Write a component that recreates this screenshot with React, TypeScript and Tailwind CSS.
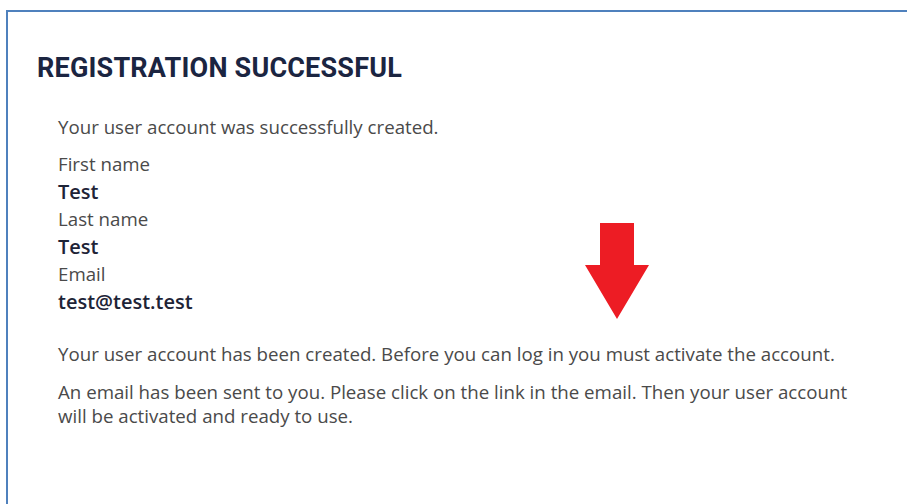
import React from 'react';

const fields = [
  { label: 'First name', value: 'Test' },
  { label: 'Last name', value: 'Test' },
  { label: 'Email', value: 'test@test.test' },
];

const DownArrow = () => (
  <svg width="66" height="98" viewBox="0 0 66 98" className="absolute left-[584px] top-[222px]">
    <path d="M16 1 H50 V43 H65 L33 97 L1 43 H16 Z" fill="#ed1c24" />
  </svg>
);

const App = () => {
  return (
    <div className="relative w-[907px] h-[504px] bg-white overflow-hidden font-['Open_Sans',sans-serif]">
      <div className="ml-[6px] mt-[10px] h-[520px] border-l-[2px] border-t-[2px] border-[#4f81bd] pl-[29px] pt-[40px]">
        <h1 className="font-['Roboto',sans-serif] font-bold text-[27px] leading-[32px] text-[#1b2541] tracking-[0.2px]">
          REGISTRATION SUCCESSFUL
        </h1>

        <div className="pl-[21px] pt-[31px] text-[18.7px] text-[#4a4a4a]">
          <p className="leading-[24px]">Your user account was successfully created.</p>

          <dl className="mt-[13px]">
            {fields.map((f) => (
              <div key={f.label}>
                <dt className="leading-[24px]">{f.label}</dt>
                <dd className="font-semibold text-[20px] leading-[31px] text-[#1e2437]">{f.value}</dd>
              </div>
            ))}
          </dl>

          <p className="mt-[25px] leading-[24px]">
            Your user account has been created. Before you can log in you must activate the account.
          </p>
          <p className="mt-[14px] leading-[24px] w-[800px]">
            An email has been sent to you. Please click on the link in the email. Then your user account will be
            activated and ready to use.
          </p>
        </div>
      </div>

      <DownArrow />
    </div>
  );
};

export default App;
